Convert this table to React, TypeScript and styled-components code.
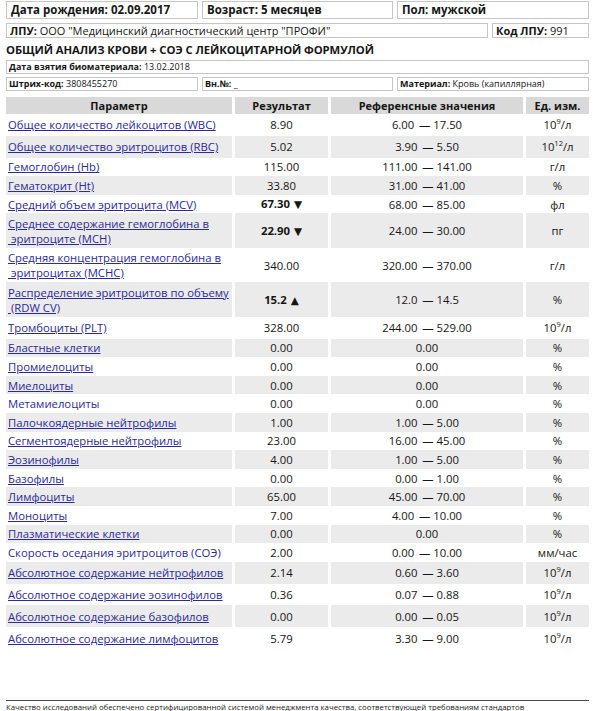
import React from "react";
import styled, { createGlobalStyle } from "styled-components";

const GlobalStyle = createGlobalStyle`
  html, body { margin: 0; padding: 0; background: #fff; }
  body {
    font-family: "Open Sans", "DejaVu Sans", sans-serif;
    color: #161616;
    width: 600px;
    height: 711px;
    overflow: hidden;
  }
`;

const Page = styled.div`
  width: 583px;
  padding: 1px 11px 0 6px;
`;

const FieldRow = styled.div<{ $cols: string; $mt?: number }>`
  display: grid;
  grid-template-columns: ${(p) => p.$cols};
  column-gap: 4px;
  margin-top: ${(p) => p.$mt ?? 0}px;
`;

const Field = styled.div<{ $size: number; $h: number; $pad: number; $bold?: boolean }>`
  box-sizing: border-box;
  height: ${(p) => p.$h}px;
  border: 1px solid #c6c6c6;
  padding: 0 ${(p) => p.$pad}px;
  font-size: ${(p) => p.$size}px;
  line-height: ${(p) => p.$h - 2}px;
  font-weight: ${(p) => (p.$bold ? 700 : 400)};
  white-space: nowrap;
  overflow: hidden;
`;

const Label = styled.b`
  font-weight: 700;
`;

const Title = styled.h1`
  margin: 3px 0 0 0;
  font-size: 11.3px;
  line-height: 17px;
  font-weight: 700;
  letter-spacing: -0.1px;
`;

const Table = styled.table`
  margin: 6px 0 0 -3px;
  width: 589px;
  table-layout: fixed;
  border-collapse: separate;
  border-spacing: 3px 0;
  font-size: 11.3px;
`;

const HeadCell = styled.th`
  background: #d9d9d9;
  height: 17px;
  padding: 0 3px;
  font-size: 11px;
  font-weight: 700;
  text-align: center;
  line-height: 15px;
`;

const Row = styled.tr<{ $striped: boolean }>`
  background: ${(p) => (p.$striped ? "#ebebeb" : "transparent")};
`;

const Cell = styled.td<{ $h: number; $align?: string; $bold?: boolean }>`
  height: ${(p) => p.$h}px;
  padding: 0 2px;
  line-height: 15px;
  vertical-align: middle;
  text-align: ${(p) => p.$align ?? "center"};
  font-weight: ${(p) => (p.$bold ? 700 : 400)};
  background: inherit;
  white-space: nowrap;
`;

const ParamLink = styled.a<{ $plain?: boolean }>`
  color: #2a2a9c;
  text-decoration: ${(p) => (p.$plain ? "none" : "underline")};
  text-underline-offset: 1px;
`;

const Sup = styled.sup`
  font-size: 7.5px;
  line-height: 0;
  vertical-align: 5px;
`;

const Arrow = styled.span`
  font-family: "DejaVu Sans", sans-serif;
  font-size: 10.5px;
  margin-left: 4px;
`;

const Footer = styled.div`
  margin-top: 51px;
`;

const Rule = styled.div`
  height: 1px;
  background: #4a4a4a;
`;

const FooterText = styled.div`
  font-size: 7.8px;
  line-height: 12px;
  color: #222;
  white-space: nowrap;
`;

type Kind = "n" | "s" | "d";
type R = {
  name: React.ReactNode;
  res: string;
  arrow?: "up" | "down";
  ref: string;
  unit: React.ReactNode;
  kind: Kind;
  plain?: boolean;
};

const u9 = (
  <>
    10<Sup>9</Sup>/л
  </>
);
const u12 = (
  <>
    10<Sup>12</Sup>/л
  </>
);

const D = "\u2009— ";

const rows: R[] = [
  { name: "Общее количество лейкоцитов (WBC)", res: "8.90", ref: `6.00 ${D}17.50`, unit: u9, kind: "s" },
  { name: "Общее количество эритроцитов (RBC)", res: "5.02", ref: `3.90 ${D}5.50`, unit: u12, kind: "s" },
  { name: "Гемоглобин (Hb)", res: "115.00", ref: `111.00 ${D}141.00`, unit: "г/л", kind: "n" },
  { name: "Гематокрит (Ht)", res: "33.80", ref: `31.00 ${D}41.00`, unit: "%", kind: "n" },
  { name: "Средний объем эритроцита (MCV)", res: "67.30", arrow: "down", ref: `68.00 ${D}85.00`, unit: "фл", kind: "n" },
  {
    name: (
      <>
        Среднее содержание гемоглобина в<br />
        {"\u00a0"}эритроците (MCH)
      </>
    ),
    res: "22.90",
    arrow: "down",
    ref: `24.00 ${D}30.00`,
    unit: "пг",
    kind: "d",
  },
  {
    name: (
      <>
        Средняя концентрация гемоглобина в<br />
        {"\u00a0"}эритроцитах (MCHC)
      </>
    ),
    res: "340.00",
    ref: `320.00 ${D}370.00`,
    unit: "г/л",
    kind: "d",
  },
  {
    name: (
      <>
        Распределение эритроцитов по объему<br />
        {"\u00a0"}(RDW CV)
      </>
    ),
    res: "15.2",
    arrow: "up",
    ref: `12.0 ${D}14.5`,
    unit: "%",
    kind: "d",
  },
  { name: "Тромбоциты (PLT)", res: "328.00", ref: `244.00 ${D}529.00`, unit: u9, kind: "s" },
  { name: "Бластные клетки", res: "0.00", ref: "0.00", unit: "%", kind: "n" },
  { name: "Промиелоциты", res: "0.00", ref: "0.00", unit: "%", kind: "n" },
  { name: "Миелоциты", res: "0.00", ref: "0.00", unit: "%", kind: "n" },
  { name: "Метамиелоциты", res: "0.00", ref: "0.00", unit: "%", kind: "n", plain: true },
  { name: "Палочкоядерные нейтрофилы", res: "1.00", ref: `1.00 ${D}5.00`, unit: "%", kind: "n" },
  { name: "Сегментоядерные нейтрофилы", res: "23.00", ref: `16.00 ${D}45.00`, unit: "%", kind: "n" },
  { name: "Эозинофилы", res: "4.00", ref: `1.00 ${D}5.00`, unit: "%", kind: "n" },
  { name: "Базофилы", res: "0.00", ref: `0.00 ${D}1.00`, unit: "%", kind: "n" },
  { name: "Лимфоциты", res: "65.00", ref: `45.00 ${D}70.00`, unit: "%", kind: "n" },
  { name: "Моноциты", res: "7.00", ref: `4.00 ${D}10.00`, unit: "%", kind: "n" },
  { name: "Плазматические клетки", res: "0.00", ref: "0.00", unit: "%", kind: "n" },
  { name: "Скорость оседания эритроцитов (СОЭ)", res: "2.00", ref: `0.00 ${D}10.00`, unit: "мм/час", kind: "n", plain: true },
  { name: "Абсолютное содержание нейтрофилов", res: "2.14", ref: `0.60 ${D}3.60`, unit: u9, kind: "s" },
  { name: "Абсолютное содержание эозинофилов", res: "0.36", ref: `0.07 ${D}0.88`, unit: u9, kind: "s" },
  { name: "Абсолютное содержание базофилов", res: "0.00", ref: `0.00 ${D}0.05`, unit: u9, kind: "s" },
  { name: "Абсолютное содержание лимфоцитов", res: "5.79", ref: `3.30 ${D}9.00`, unit: u9, kind: "s" },
];

const heights: Record<Kind, number> = { n: 18.6, s: 21.8, d: 34.5 };

export default function App() {
  return (
    <>
      <GlobalStyle />
      <Page>
        <FieldRow $cols="192px 191px 192px">
          <Field $size={11.5} $h={18} $pad={4} $bold>
            Дата рождения: 02.09.2017
          </Field>
          <Field $size={11.5} $h={18} $pad={4} $bold>
            Возраст: 5 месяцев
          </Field>
          <Field $size={11.5} $h={18} $pad={4} $bold>
            Пол: мужской
          </Field>
        </FieldRow>
        <FieldRow $cols="482px 97px" $mt={4}>
          <Field $size={11} $h={15} $pad={3}>
            <Label>ЛПУ:</Label> ООО "Медицинский диагностический центр "ПРОФИ"
          </Field>
          <Field $size={11} $h={15} $pad={3}>
            <Label>Код ЛПУ:</Label> 991
          </Field>
        </FieldRow>
        <Title>ОБЩИЙ АНАЛИЗ КРОВИ + СОЭ С ЛЕЙКОЦИТАРНОЙ ФОРМУЛОЙ</Title>
        <FieldRow $cols="583px" $mt={2}>
          <Field $size={9} $h={14} $pad={2}>
            <Label>Дата взятия биоматериала:</Label> 13.02.2018
          </Field>
        </FieldRow>
        <FieldRow $cols="192px 191px 192px" $mt={3}>
          <Field $size={9} $h={14} $pad={2}>
            <Label>Штрих-код:</Label> 3808455270
          </Field>
          <Field $size={9} $h={14} $pad={2}>
            <Label>Вн.№:</Label> _
          </Field>
          <Field $size={9} $h={14} $pad={2}>
            <Label>Материал:</Label> Кровь (капиллярная)
          </Field>
        </FieldRow>
        <Table>
          <colgroup>
            <col style={{ width: 226 }} />
            <col style={{ width: 93 }} />
            <col style={{ width: 192 }} />
            <col style={{ width: 63 }} />
          </colgroup>
          <thead>
            <tr>
              <HeadCell>Параметр</HeadCell>
              <HeadCell>Результат</HeadCell>
              <HeadCell>Референсные значения</HeadCell>
              <HeadCell>Ед. изм.</HeadCell>
            </tr>
          </thead>
          <tbody>
            {rows.map((r, i) => (
              <Row key={i} $striped={i % 2 === 1}>
                <Cell $h={heights[r.kind]} $align="left">
                  <ParamLink href="#" $plain={r.plain}>
                    {r.name}
                  </ParamLink>
                </Cell>
                <Cell $h={heights[r.kind]} $bold={!!r.arrow}>
                  {r.res}
                  {r.arrow && <Arrow>{r.arrow === "up" ? "▲" : "▼"}</Arrow>}
                </Cell>
                <Cell $h={heights[r.kind]}>{r.ref}</Cell>
                <Cell $h={heights[r.kind]}>{r.unit}</Cell>
              </Row>
            ))}
          </tbody>
        </Table>
        <Footer>
          <Rule />
          <FooterText>
            Качество исследований обеспечено сертифицированной системой менеджмента качества, соответствующей
            требованиям стандартов
          </FooterText>
        </Footer>
      </Page>
    </>
  );
}
